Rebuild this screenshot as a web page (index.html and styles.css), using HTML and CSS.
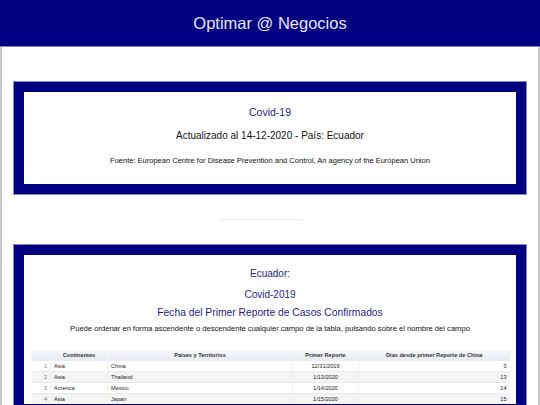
FILE: index.html
```html
<!DOCTYPE html>
<html lang="es">
<head>
<meta charset="utf-8">
<title>Optimar @ Negocios</title>
<link rel="stylesheet" href="styles.css">
</head>
<body>
<header class="topbar">
  <h1 class="brand">Optimar @ Negocios</h1>
</header>
<main class="page">
  <section class="card card-intro">
    <h2 class="t-navy t-first">Covid-19</h2>
    <h3 class="t-black t-update">Actualizado al 14-12-2020 - País: Ecuador</h3>
    <p class="t-source">Fuente: European Centre for Disease Prevention and Control, An agency of the European Union</p>
  </section>
  <hr class="divider">
  <section class="card card-table">
    <h2 class="t-navy t-country">Ecuador:</h2>
    <h2 class="t-navy t-covid">Covid-2019</h2>
    <h2 class="t-navy t-fecha">Fecha del Primer Reporte de Casos Confirmados</h2>
    <p class="t-hint">Puede ordenar en forma ascendente o descendente cualquier campo de la tabla, pulsando sobre el nombre del campo</p>
    <table class="gtable">
      <colgroup>
        <col class="c-seq"><col class="c-cont"><col class="c-pais"><col class="c-fecha"><col class="c-dias">
      </colgroup>
      <thead>
        <tr class="head">
          <th></th><th>Continentes</th><th>Paises y Territorios</th><th>Primer Reporte</th><th>Dias desde primer Reporte de China</th>
        </tr>
      </thead>
      <tbody>
        <tr><td class="seq">1</td><td>Asia</td><td>China</td><td class="ctr">12/31/2019</td><td class="num">0</td></tr>
        <tr class="odd"><td class="seq">2</td><td>Asia</td><td>Thailand</td><td class="ctr">1/13/2020</td><td class="num">13</td></tr>
        <tr><td class="seq">3</td><td>America</td><td>Mexico</td><td class="ctr">1/14/2020</td><td class="num">14</td></tr>
        <tr class="odd"><td class="seq">4</td><td>Asia</td><td>Japan</td><td class="ctr">1/15/2020</td><td class="num">15</td></tr>
      </tbody>
    </table>
  </section>
</main>
</body>
</html>
```
FILE: styles.css
```css
html, body {
  margin: 0;
  padding: 0;
  background: #ffffff;
  font-family: "Liberation Sans", Arial, sans-serif;
}

.topbar {
  height: 46px;
  background: #000080;
  border-bottom: 1px solid #8080c8;
  display: flex;
  align-items: center;
  justify-content: center;
}

.brand {
  margin: 0;
  font-size: 16.5px;
  font-weight: normal;
  color: #e6e6fa;
  line-height: 20px;
}

.page {
  border-left: 2px solid #c8c8c8;
  border-right: 2px solid #c8c8c8;
  padding: 35px 12px 0 12px;
  min-height: 400px;
}

.card {
  border: 10px solid #000080;
  box-shadow: 0 0 0 1px #8484c8;
  background: #ffffff;
  text-align: center;
}

.card-intro {
  padding: 13px 0 18px;
}

.t-navy {
  color: #1e1e88;
}

.t-black {
  color: #111111;
}

.t-first {
  margin: 0;
  font-weight: normal;
  font-size: 10.5px;
  line-height: 14px;
}

.t-update {
  margin: 10px 0 0;
  font-weight: normal;
  font-size: 10px;
  line-height: 14px;
}

.t-source {
  margin: 13px 0 0;
  font-size: 7.5px;
  line-height: 10px;
  color: #111111;
}

.divider {
  width: 82px;
  height: 0;
  border: 0;
  border-top: 1px solid #efefef;
  margin: 25px 0 0 206px;
}

.card-table {
  margin-top: 25px;
  padding: 12px 7px 0;
}

.t-country {
  margin: 0;
  font-weight: normal;
  font-size: 10px;
  line-height: 14px;
}

.t-covid {
  margin: 7px 0 0;
  font-weight: normal;
  font-size: 10px;
  line-height: 14px;
}

.t-fecha {
  margin: 4px 0 0;
  font-weight: normal;
  font-size: 10.3px;
  line-height: 14px;
}

.t-hint {
  margin: 4px 0 0;
  font-size: 7.6px;
  line-height: 10px;
  color: #111111;
}

.gtable {
  margin-top: 16px;
  width: 100%;
  table-layout: fixed;
  border-collapse: collapse;
  font-size: 5.6px;
  color: #222222;
  text-align: left;
}

.c-seq { width: 19px; }
.c-cont { width: 57px; }
.c-pais { width: 185px; }
.c-fecha { width: 66px; }
.c-dias { width: 151px; }

.gtable th {
  height: 10px;
  padding: 0 3px;
  font-weight: bold;
  text-align: center;
  color: #333333;
  border-left: 1px solid #f4f5fa;
  background: linear-gradient(to bottom, #f7f8fc, #e7ebf5);
}

.gtable td {
  height: 10px;
  padding: 0 3px;
  border-top: 1px solid #ececec;
  border-left: 1px solid #f0f0f0;
  white-space: nowrap;
  overflow: hidden;
}

.gtable tr.odd td {
  background: #f4f4f4;
}

.gtable td.seq {
  text-align: right;
  color: #777777;
  border-left: 0;
}

.gtable td.ctr {
  text-align: center;
}

.gtable td.num {
  text-align: right;
}
```
